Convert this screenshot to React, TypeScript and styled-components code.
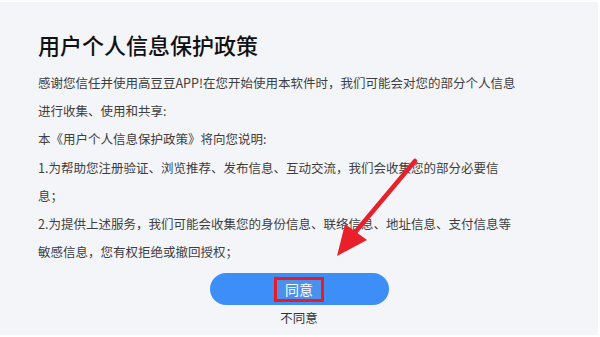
import * as React from "react"
import styled, { createGlobalStyle } from "styled-components"

const GlobalStyle = createGlobalStyle`
  html, body {
    margin: 0;
    padding: 0;
    background: #ffffff;
  }
  body {
    font-family: "Noto Sans CJK SC", "Noto Sans", sans-serif;
  }
`

const Frame = styled.div`
  width: 600px;
  height: 337px;
  box-sizing: border-box;
  padding: 2px 2px 2px 0;
  background: #ffffff;
`

const Panel = styled.main`
  position: relative;
  height: 100%;
  box-sizing: border-box;
  background: #f4f5f9;
  padding: 27px 0 0 38px;
  display: flex;
  flex-direction: column;
`

const Title = styled.h1`
  margin: 0 0 10px;
  font-size: 22px;
  line-height: 30px;
  font-weight: 500;
  color: #111111;
`

const Body = styled.div`
  width: 478px;
  font-size: 12.5px;
  line-height: 28.2px;
  color: #3e3e3e;
`

const Para = styled.p`
  margin: 0;
`

const Actions = styled.div`
  margin: 7px 0 0 -38px;
  display: flex;
  flex-direction: column;
  align-items: center;
`

const AgreeButton = styled.button`
  width: 179px;
  height: 32px;
  border: none;
  border-radius: 16px;
  background: #3d8ef7;
  display: flex;
  align-items: center;
  justify-content: center;
  padding: 0;
  font-family: inherit;
  cursor: pointer;
`

const AgreeLabel = styled.span`
  display: inline-block;
  border: 3px solid #e81c24;
  background: #4a91ee;
  color: #ffffff;
  font-size: 14px;
  line-height: 19px;
  padding: 0 8px;
`

const DeclineButton = styled.button`
  margin-top: 4px;
  border: none;
  background: none;
  padding: 0;
  font-family: inherit;
  font-size: 12.5px;
  line-height: 18px;
  color: #333333;
  cursor: pointer;
`

const ArrowOverlay = styled.svg`
  position: absolute;
  left: 0;
  top: -2px;
  pointer-events: none;
`

const Arrow = () => (
  <ArrowOverlay width="600" height="337" viewBox="0 0 600 337">
    <line x1="415" y1="161" x2="352" y2="236" stroke="#e8202a" strokeWidth="4.5" strokeLinecap="round" />
    <polygon points="337,256 345,224 367,240" fill="#e8202a" />
  </ArrowOverlay>
)

export default function App() {
  return (
    <>
      <GlobalStyle />
      <Frame>
        <Panel>
          <Title>用户个人信息保护政策</Title>
          <Body>
            <Para>感谢您信任并使用高豆豆APP!在您开始使用本软件时，我们可能会对您的部分个人信息进行收集、使用和共享:</Para>
            <Para>本《用户个人信息保护政策》将向您说明:</Para>
            <Para>1.为帮助您注册验证、浏览推荐、发布信息、互动交流，我们会收集您的部分必要信息；</Para>
            <Para>2.为提供上述服务，我们可能会收集您的身份信息、联络信息、地址信息、支付信息等敏感信息，您有权拒绝或撤回授权；</Para>
          </Body>
          <Actions>
            <AgreeButton>
              <AgreeLabel>同意</AgreeLabel>
            </AgreeButton>
            <DeclineButton>不同意</DeclineButton>
          </Actions>
          <Arrow />
        </Panel>
      </Frame>
    </>
  )
}
